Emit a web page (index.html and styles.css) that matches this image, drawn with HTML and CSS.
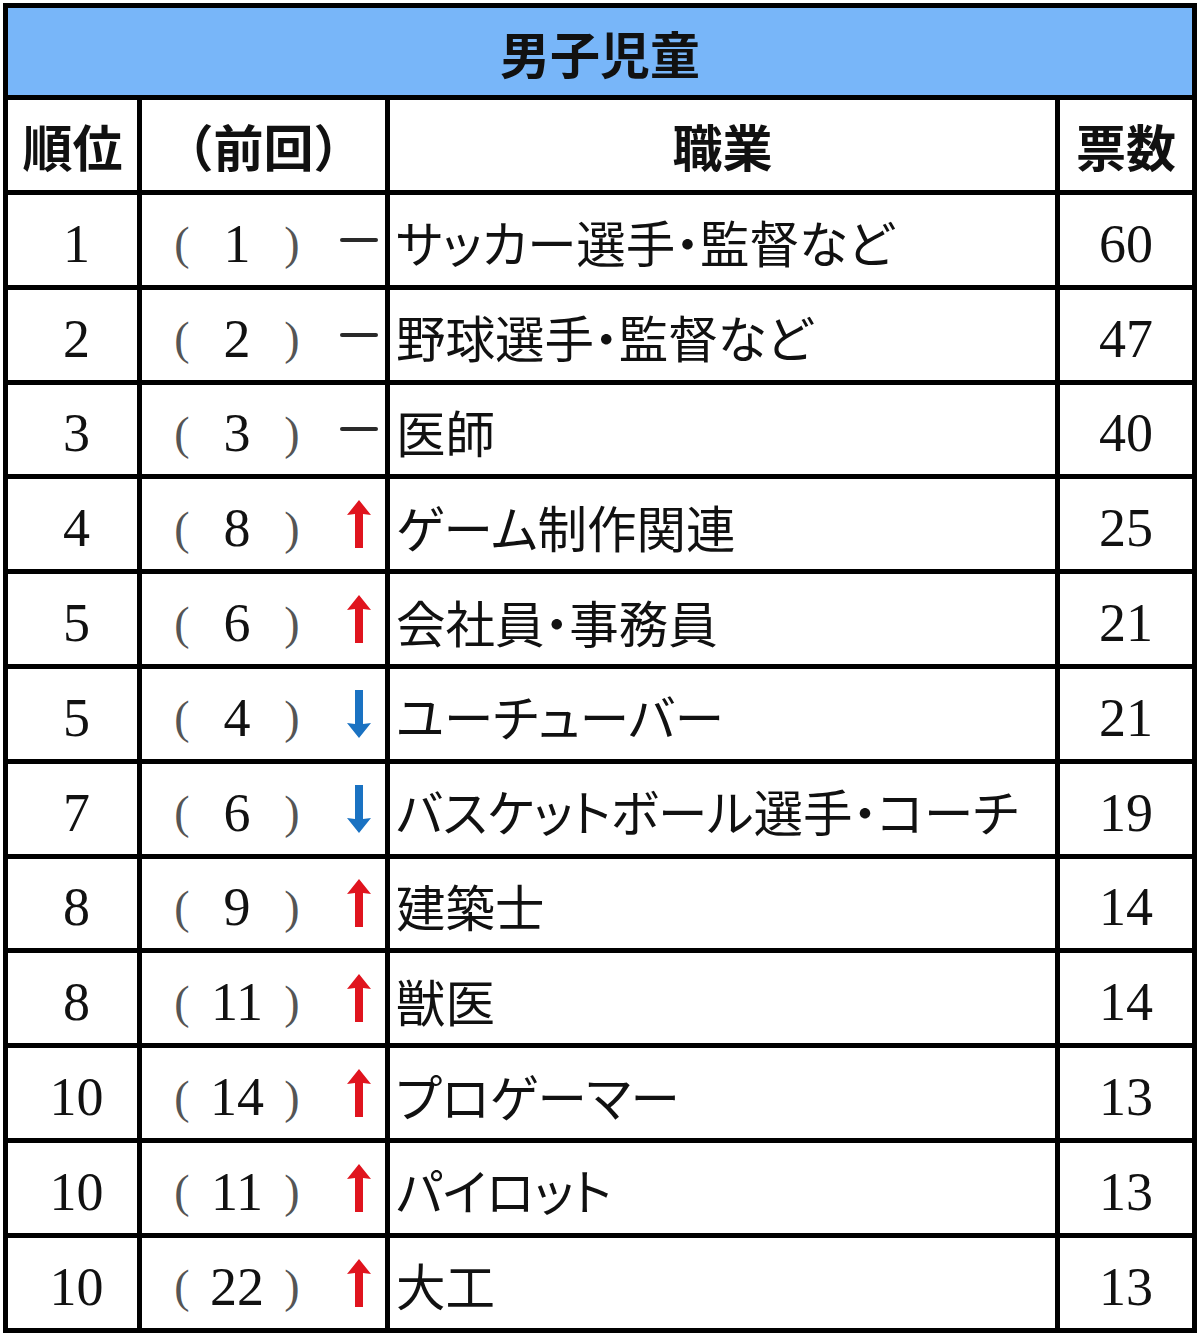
FILE: index.html
```html
<!DOCTYPE html>
<html lang="ja">
<head>
<meta charset="utf-8">
<title>男子児童</title>
<link rel="stylesheet" href="styles.css">
</head>
<body>
<svg width="0" height="0" class="defs">
  <defs>
    <symbol id="up" viewBox="0 0 24 48"><path d="M12 0 L24 15 L16 14 L16 48 L8 48 L8 14 L0 15 Z"/></symbol>
    <symbol id="down" viewBox="0 0 24 48"><path d="M12 48 L24 33 L16 34 L16 0 L8 0 L8 34 L0 33 Z"/></symbol>
  </defs>
</svg>
<div class="table">
  <div class="title">男子児童</div>

  <div class="th">順位</div>
  <div class="th">（前回）</div>
  <div class="th">職業</div>
  <div class="th">票数</div>

  <div class="rank">1</div>
  <div class="prev"><span class="lp">(</span><span class="pn">1</span><span class="rp">)</span><span class="tr"><span class="dash"></span></span></div>
  <div class="job">サッカー選手・監督など</div>
  <div class="votes">60</div>

  <div class="rank">2</div>
  <div class="prev"><span class="lp">(</span><span class="pn">2</span><span class="rp">)</span><span class="tr"><span class="dash"></span></span></div>
  <div class="job">野球選手・監督など</div>
  <div class="votes">47</div>

  <div class="rank">3</div>
  <div class="prev"><span class="lp">(</span><span class="pn">3</span><span class="rp">)</span><span class="tr"><span class="dash"></span></span></div>
  <div class="job">医師</div>
  <div class="votes">40</div>

  <div class="rank">4</div>
  <div class="prev"><span class="lp">(</span><span class="pn">8</span><span class="rp">)</span><span class="tr"><svg class="arrow up"><use href="#up"/></svg></span></div>
  <div class="job">ゲーム制作関連</div>
  <div class="votes">25</div>

  <div class="rank">5</div>
  <div class="prev"><span class="lp">(</span><span class="pn">6</span><span class="rp">)</span><span class="tr"><svg class="arrow up"><use href="#up"/></svg></span></div>
  <div class="job">会社員・事務員</div>
  <div class="votes">21</div>

  <div class="rank">5</div>
  <div class="prev"><span class="lp">(</span><span class="pn">4</span><span class="rp">)</span><span class="tr"><svg class="arrow down"><use href="#down"/></svg></span></div>
  <div class="job">ユーチューバー</div>
  <div class="votes">21</div>

  <div class="rank">7</div>
  <div class="prev"><span class="lp">(</span><span class="pn">6</span><span class="rp">)</span><span class="tr"><svg class="arrow down"><use href="#down"/></svg></span></div>
  <div class="job">バスケットボール選手・コーチ</div>
  <div class="votes">19</div>

  <div class="rank">8</div>
  <div class="prev"><span class="lp">(</span><span class="pn">9</span><span class="rp">)</span><span class="tr"><svg class="arrow up"><use href="#up"/></svg></span></div>
  <div class="job">建築士</div>
  <div class="votes">14</div>

  <div class="rank">8</div>
  <div class="prev"><span class="lp">(</span><span class="pn">11</span><span class="rp">)</span><span class="tr"><svg class="arrow up"><use href="#up"/></svg></span></div>
  <div class="job">獣医</div>
  <div class="votes">14</div>

  <div class="rank">10</div>
  <div class="prev"><span class="lp">(</span><span class="pn">14</span><span class="rp">)</span><span class="tr"><svg class="arrow up"><use href="#up"/></svg></span></div>
  <div class="job">プロゲーマー</div>
  <div class="votes">13</div>

  <div class="rank">10</div>
  <div class="prev"><span class="lp">(</span><span class="pn">11</span><span class="rp">)</span><span class="tr"><svg class="arrow up"><use href="#up"/></svg></span></div>
  <div class="job">パイロット</div>
  <div class="votes">13</div>

  <div class="rank">10</div>
  <div class="prev"><span class="lp">(</span><span class="pn">22</span><span class="rp">)</span><span class="tr"><svg class="arrow up"><use href="#up"/></svg></span></div>
  <div class="job">大工</div>
  <div class="votes">13</div>
</div>
</body>
</html>
```
FILE: styles.css
```css
html, body {
  margin: 0;
  padding: 0;
  background: #ffffff;
}

.defs {
  position: absolute;
  width: 0;
  height: 0;
}

.table {
  margin: 3px 0 0 3px;
  width: 1194px;
  box-sizing: border-box;
  display: grid;
  grid-template-columns: 129px 243px 665px 132px;
  grid-template-rows: 87px 90px repeat(12, 89.8px);
  gap: 5px;
  padding: 5px;
  background: #000000;
}

.table > div {
  background: #ffffff;
  display: flex;
  align-items: center;
  color: #111111;
}

.title {
  grid-column: 1 / -1;
  justify-content: center;
  background: #78b6f9 !important;
  font-family: "Noto Sans CJK JP", sans-serif;
  font-weight: 700;
  font-size: 50px;
  color: #000000;
}

.th {
  justify-content: center;
  font-family: "Noto Sans CJK JP", sans-serif;
  font-weight: 700;
  font-size: 50px;
  color: #000000;
}

.rank, .votes {
  justify-content: center;
  font-family: "Liberation Serif", "DejaVu Serif", serif;
  font-size: 54px;
  color: #1a1a2a;
  padding-top: 8px;
  box-sizing: border-box;
}

.rank {
  padding-left: 8px;
}

.job {
  padding-left: 6px;
  font-family: "Noto Sans CJK JP", sans-serif;
  font-size: 49.5px;
  font-feature-settings: "palt";
  color: #1a1a1a;
  white-space: nowrap;
  padding-top: 4px;
  box-sizing: border-box;
}

.prev {
  display: grid !important;
  grid-template-columns: 30px 20px 90px 20px 36px 42px;
  align-items: center;
  font-family: "Liberation Serif", "DejaVu Serif", serif;
  font-size: 54px;
  color: #1a1a2a;
  padding-top: 8px;
  box-sizing: border-box;
}

.lp {
  grid-column: 2;
  text-align: center;
  font-size: 46px;
  color: #555555;
}

.pn {
  grid-column: 3;
  text-align: center;
}

.rp {
  grid-column: 4;
  text-align: center;
  font-size: 46px;
  color: #555555;
}

.tr {
  grid-column: 6;
  display: flex;
  justify-content: center;
  align-items: center;
  height: 60px;
  margin-top: -8px;
}

.dash {
  display: block;
  width: 38px;
  height: 4px;
  background: #2a2a2a;
  border-radius: 2px;
}

.arrow {
  width: 24px;
  height: 48px;
}

.arrow.up {
  fill: #e0141e;
}

.arrow.down {
  fill: #1a72c2;
}
```
